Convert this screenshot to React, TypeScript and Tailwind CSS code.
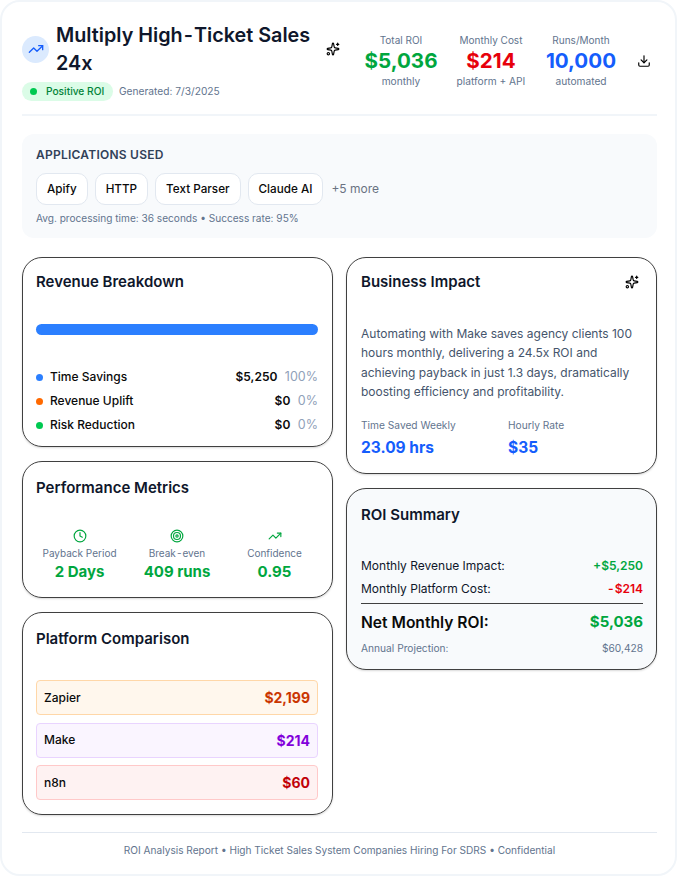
import { TrendingUp, Sparkles, Download, Clock, Target } from "lucide-react";

const Hy = () => <span className="mx-[1px]">-</span>;

const Card = ({ title, icon, className = "", children }: { title: string; icon?: boolean; className?: string; children: React.ReactNode }) => (
  <div className={`rounded-[20px] border border-[#404040] pb-[14px] shadow-[0_1px_2px_rgba(0,0,0,0.15)] ${className}`}>
    <div className="flex items-center justify-between h-[26px]">
      <h3 className="text-[15px] font-semibold text-slate-900 leading-6">{title}</h3>
      {icon && <Sparkles className="w-[14px] h-[14px] mr-[4px] text-black" />}
    </div>
    {children}
  </div>
);

const Stat = ({ label, value, sub, color }: { label: string; value: string; sub: string; color: string }) => (
  <div className="w-[72px] flex flex-col items-center whitespace-nowrap">
    <div className="text-[10px] leading-[15.5px] text-slate-500">{label}</div>
    <div className={`text-[20.6px] leading-[23px] font-bold ${color}`}>{value}</div>
    <div className="text-[10.2px] leading-[18px] text-slate-500">{sub}</div>
  </div>
);

const Row = ({ dot, label, value, pct }: { dot: string; label: string; value: string; pct: string }) => (
  <div className="flex items-center h-[24px] text-[12px]">
    <span className={`w-[7px] h-[7px] rounded-full mr-[7px] ${dot}`} />
    <span className="text-[#0a0a0a] font-medium">{label}</span>
    <span className="ml-auto font-semibold text-[#0a0a0a]">{value}</span>
    <span className="ml-[7.5px] text-[12.5px] text-slate-400">{pct}</span>
  </div>
);

const Metric = ({ icon, label, value }: { icon: React.ReactNode; label: React.ReactNode; value: string }) => (
  <div className="flex flex-col items-center">
    <div className="h-4 flex items-center justify-center text-green-600">{icon}</div>
    <div className="text-[10px] leading-[17px] mt-[1px] text-slate-500">{label}</div>
    <div className="text-[15px] leading-[19px] font-bold text-green-600">{value}</div>
  </div>
);

const Platform = ({ name, price, box, color }: { name: string; price: string; box: string; color: string }) => (
  <div className={`flex items-center justify-between h-[35px] rounded-[4px] border px-[7px] ${box}`}>
    <span className="text-[12px] font-medium text-[#0a0a0a]">{name}</span>
    <span className={`text-[14px] font-bold ${color}`}>{price}</span>
  </div>
);

const App = () => (
  <div className="min-h-[876px] bg-white rounded-[20px] border-2 border-slate-100 pl-5 pr-[18px] pt-5 font-['Inter',sans-serif]">
    <header className="flex items-start justify-between border-b-2 border-slate-100 h-[94px]">
      <div className="-mt-[1px]">
        <div className="flex items-center">
          <div className="w-[27px] h-[27px] rounded-full bg-blue-100 flex items-center justify-center mr-[7px]">
            <TrendingUp className="w-4 h-4 text-blue-600" />
          </div>
          <h1 className="w-[268px] text-[19.8px] leading-[28px] font-semibold text-slate-900">Multiply High<Hy />Ticket Sales<br />24x</h1>
          <Sparkles className="w-[14px] h-[14px] ml-[2px] -mt-[1px] text-black" />
        </div>
        <div className="flex items-center gap-[6px] mt-[5px]">
          <div className="flex items-center h-[19px] w-[91px] rounded-full bg-green-100 pl-[8px] gap-[9px]">
            <span className="w-[7px] h-[7px] rounded-full bg-green-500" />
            <span className="text-[10.2px] font-medium text-green-700">Positive ROI</span>
          </div>
          <span className="text-[10.2px] text-slate-500">Generated: 7/3/2025</span>
        </div>
      </div>
      <div className="flex items-center gap-5 mt-[11px]">
        <div className="flex items-center gap-[18px]">
          <Stat label="Total ROI" value="$5,036" sub="monthly" color="text-green-600" />
          <Stat label="Monthly Cost" value="$214" sub="platform + API" color="text-red-600" />
          <Stat label="Runs/Month" value="10,000" sub="automated" color="text-blue-600" />
        </div>
        <Download className="w-[14px] h-[14px] text-black mr-[6px]" />
      </div>
    </header>

    <section className="mt-[18px] h-[104px] rounded-[12px] bg-slate-50 px-[14px] pt-[12px]">
      <div className="text-[12px] leading-[18px] font-semibold tracking-[0.02em] text-slate-700">APPLICATIONS USED</div>
      <div className="flex items-center gap-[7px] mt-[9px]">
        {["Apify", "HTTP", "Text Parser", "Claude AI"].map((a) => (
          <span key={a} className="h-[32px] flex items-center px-[10px] pt-[1px] rounded-[10px] bg-white border border-slate-200 text-[11.7px] font-medium text-[#0a0a0a]">{a}</span>
        ))}
        <span className="ml-[1px] text-[12px] text-gray-500">+5 more</span>
      </div>
      <div className="text-[10.1px] leading-4 mt-[5px] text-slate-500">Avg. processing time: 36 seconds • Success rate: 95%</div>
    </section>

    <main className="grid grid-cols-2 gap-x-[13px] mt-[19px]">
      <div className="flex flex-col gap-[14px]">
        <Card title="Revenue Breakdown" className="h-[190px] pl-[13px] pr-[14px] pt-[11px]">
          <div className="h-[11px] mt-[29px] rounded-full bg-blue-500" />
          <div className="mt-[30px]">
            <Row dot="bg-blue-500" label="Time Savings" value="$5,250" pct="100%" />
            <Row dot="bg-orange-500" label="Revenue Uplift" value="$0" pct="0%" />
            <Row dot="bg-green-500" label="Risk Reduction" value="$0" pct="0%" />
          </div>
        </Card>
        <Card title="Performance Metrics" className="h-[137px] pl-[13px] pr-[14px] pt-[13px]">
          <div className="grid grid-cols-3 gap-x-[10.5px] mt-[27px]">
            <Metric icon={<Clock className="w-[14px] h-[14px]" />} label="Payback Period" value="2 Days" />
            <Metric icon={<Target className="w-[14px] h-[14px]" />} label={<>Break<Hy />even</>} value="409 runs" />
            <Metric icon={<TrendingUp className="w-[14px] h-[14px]" />} label="Confidence" value="0.95" />
          </div>
        </Card>
        <Card title="Platform Comparison" className="h-[203px] pl-[13px] pr-[14px] pt-[13px]">
          <div className="flex flex-col gap-[7.5px] mt-[28px]">
            <Platform name="Zapier" price="$2,199" box="bg-orange-50 border-orange-200" color="text-orange-700" />
            <Platform name="Make" price="$214" box="bg-purple-50 border-purple-200" color="text-purple-700" />
            <Platform name="n8n" price="$60" box="bg-red-50 border-red-200" color="text-red-700" />
          </div>
        </Card>
      </div>
      <div className="flex flex-col gap-[14px] self-start">
        <Card title="Business Impact" icon className="h-[216.5px] pl-[14px] pr-[13px] pt-[11px]">
          <p className="mt-[29px] text-[12px] leading-[19.3px] text-slate-600">Automating with Make saves agency clients 100 hours monthly, delivering a 24.5x ROI and achieving payback in just 1.3 days, dramatically boosting efficiency and profitability.</p>
          <div className="grid grid-cols-2 gap-x-3 mt-[16px]">
            <div>
              <div className="text-[10.2px] leading-4 text-slate-500">Time Saved Weekly</div>
              <div className="text-[15.5px] leading-[22px] mt-[4px] font-bold text-blue-600">23.09 hrs</div>
            </div>
            <div>
              <div className="text-[10.2px] leading-4 text-slate-500">Hourly Rate</div>
              <div className="text-[15.5px] leading-[22px] mt-[4px] font-bold text-blue-600">$35</div>
            </div>
          </div>
        </Card>
        <Card title="ROI Summary" className="h-[182px] bg-slate-50 pl-[14px] pr-[13px] pt-[13px]">
          <div className="mt-[26px] flex justify-between items-center h-[24px] text-[12px]">
            <span className="text-slate-900">Monthly Revenue Impact:</span>
            <span className="font-semibold text-green-600">+$5,250</span>
          </div>
          <div className="flex justify-between items-center h-[22px] text-[12px]">
            <span className="text-slate-900">Monthly Platform Cost:</span>
            <span className="font-semibold text-red-600"><Hy />$214</span>
          </div>
          <div className="border-t border-[#404040] mt-[3px] flex justify-between items-center h-[38.5px]">
            <span className="text-[15.6px] font-semibold text-[#0a0a0a]">Net Monthly ROI:</span>
            <span className="text-[15px] font-bold text-green-600">$5,036</span>
          </div>
          <div className="flex justify-between items-center h-[16px] text-[10.2px] text-slate-500">
            <span>Annual Projection:</span>
            <span>$60,428</span>
          </div>
        </Card>
      </div>
    </main>

    <footer className="mt-[17px] border-t border-slate-200 pt-[9px] text-center text-[10.1px] leading-4 text-slate-500">
      ROI Analysis Report • High Ticket Sales System Companies Hiring For SDRS • Confidential
    </footer>
  </div>
);

export default App;
